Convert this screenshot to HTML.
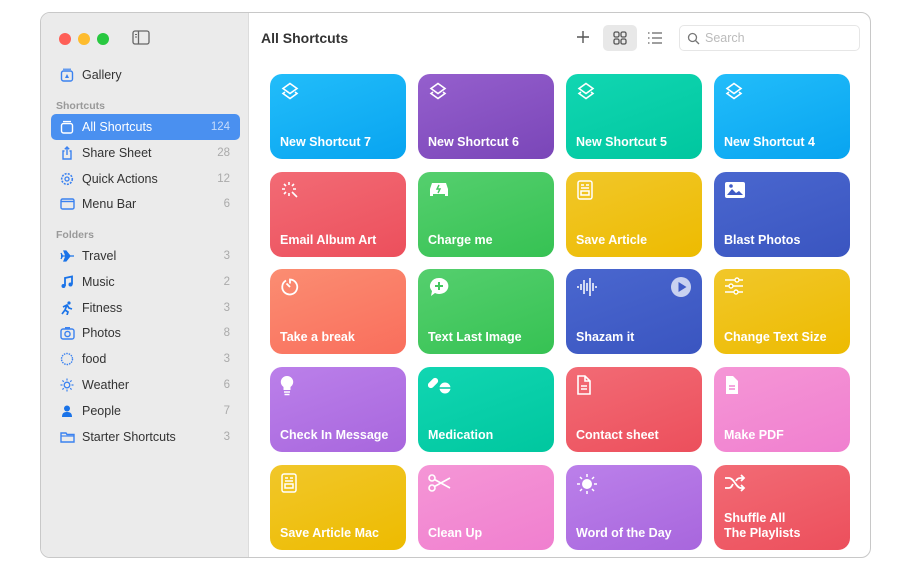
<!DOCTYPE html>
<html><head><meta charset="utf-8"><style>
*{box-sizing:border-box;margin:0;padding:0}
body{width:916px;height:573px;background:#fff;font-family:"Liberation Sans",sans-serif;position:relative;overflow:hidden}
.win{position:absolute;left:40px;top:12px;width:831px;height:546px;border:1px solid #c8c8c8;border-radius:10px;overflow:hidden;background:#fff}
.side{position:absolute;left:0;top:0;width:208px;height:100%;background:#ebebeb;border-right:1px solid #dcdcdc}
.dot{position:absolute;top:20px;width:12px;height:12px;border-radius:50%}
.it{position:absolute;left:10px;width:189px;height:26px;font-size:12.5px;color:#333;line-height:26px;padding-left:31px;border-radius:5px}
.it svg{position:absolute;left:9px;top:6px}
.it .c{position:absolute;right:10px;top:0;color:#aaa;font-size:11.5px}
.it.sel{background:#4a90f0;color:#fff}
.it.sel .c{color:#c7dcfb}
.hd{position:absolute;left:15px;font-size:10.5px;color:#999;font-weight:bold}
.t{position:absolute;width:136px;height:85px;border-radius:12px;color:#fff;font-weight:bold;font-size:12.5px}
.t .l{position:absolute;left:10px;bottom:9px;line-height:15px}
.t svg{position:absolute;left:10px;top:8px}
</style></head><body>
<div class="win">
<div class="side">
<div class="dot" style="left:18px;background:#fe5f57"></div>
<div class="dot" style="left:37px;background:#febc2e"></div>
<div class="dot" style="left:56px;background:#28c840"></div>
<svg style="position:absolute;left:91px;top:17px" width="18" height="15" viewBox="0 0 18 15"><rect x="1" y="1" width="16" height="13" rx="2" fill="none" stroke="#666" stroke-width="1.3"/><line x1="6.5" y1="1" x2="6.5" y2="14" stroke="#666" stroke-width="1.3"/><line x1="3" y1="4.5" x2="5" y2="4.5" stroke="#666"/><line x1="3" y1="7" x2="5" y2="7" stroke="#666"/></svg>
<div class="it" style="top:49px"><svg width="14" height="14" viewBox="0 0 14 14"><rect x="1.5" y="3" width="11" height="10" rx="2" fill="none" stroke="#3b82f0" stroke-width="1.4"/><line x1="3" y1="1.2" x2="11" y2="1.2" stroke="#3b82f0" stroke-width="1.2"/><path d="M5 10l2-4 2 4z" fill="#3b82f0"/></svg>Gallery</div>
<div class="hd" style="top:87px">Shortcuts</div>
<div class="it sel" style="top:101px"><svg width="14" height="14" viewBox="0 0 14 14"><rect x="1.5" y="3.5" width="11" height="9.5" rx="2" fill="none" stroke="#fff" stroke-width="1.4"/><line x1="3" y1="1.5" x2="11" y2="1.5" stroke="#fff" stroke-width="1.2"/></svg>All Shortcuts<span class="c">124</span></div>
<div class="it" style="top:127px"><svg width="14" height="14" viewBox="0 0 14 14"><path d="M4.5 5H3v8h8V5H9.5M7 9V1M4.8 3.2L7 1l2.2 2.2" fill="none" stroke="#3b82f0" stroke-width="1.4"/></svg>Share Sheet<span class="c">28</span></div>
<div class="it" style="top:153px"><svg width="14" height="14" viewBox="0 0 14 14"><circle cx="7" cy="7" r="5.3" fill="none" stroke="#3b82f0" stroke-width="1.6" stroke-dasharray="2 1.2"/><circle cx="7" cy="7" r="2" fill="none" stroke="#3b82f0" stroke-width="1.3"/></svg>Quick Actions<span class="c">12</span></div>
<div class="it" style="top:178px"><svg width="15" height="14" viewBox="0 0 15 14"><rect x="1" y="2" width="13" height="10" rx="1.5" fill="none" stroke="#3b82f0" stroke-width="1.4"/><line x1="1" y1="4.5" x2="14" y2="4.5" stroke="#3b82f0" stroke-width="1.4"/></svg>Menu Bar<span class="c">6</span></div>
<div class="hd" style="top:216px">Folders</div>
<div class="it" style="top:230px"><svg width="15" height="14" viewBox="0 0 15 14"><path d="M1 7h13M6 7L4 2h2l4 5-4 5H4z M1 4l1.5 3L1 10" fill="#1a73e8" stroke="#1a73e8" stroke-width="1.3"/></svg>Travel<span class="c">3</span></div>
<div class="it" style="top:256px"><svg width="14" height="14" viewBox="0 0 14 14"><path d="M5 11V3l7-1.5v8" fill="none" stroke="#1a73e8" stroke-width="1.8"/><circle cx="3.5" cy="11" r="2" fill="#1a73e8"/><circle cx="10.5" cy="9.5" r="2" fill="#1a73e8"/></svg>Music<span class="c">2</span></div>
<div class="it" style="top:282px"><svg width="14" height="14" viewBox="0 0 14 14"><circle cx="9" cy="2" r="1.6" fill="#1a73e8"/><path d="M3 6l4-2 2 3 3 1M7 4l-2 5-3 4M5 9l3 2-1 3" fill="none" stroke="#1a73e8" stroke-width="1.7"/></svg>Fitness<span class="c">3</span></div>
<div class="it" style="top:307px"><svg width="15" height="14" viewBox="0 0 15 14"><rect x="1" y="3" width="13" height="10" rx="2" fill="none" stroke="#3b82f0" stroke-width="1.4"/><rect x="5" y="1" width="5" height="2" fill="#3b82f0"/><circle cx="7.5" cy="8" r="2.6" fill="none" stroke="#3b82f0" stroke-width="1.4"/></svg>Photos<span class="c">8</span></div>
<div class="it" style="top:333px"><svg width="14" height="14" viewBox="0 0 14 14"><circle cx="7" cy="7" r="5.5" fill="none" stroke="#3b82f0" stroke-width="1.4" stroke-dasharray="1.5 1"/></svg>food<span class="c">3</span></div>
<div class="it" style="top:359px"><svg width="14" height="14" viewBox="0 0 14 14"><circle cx="7" cy="7" r="2.8" fill="none" stroke="#3b82f0" stroke-width="1.3"/><path d="M7 0.5v2M7 11.5v2M0.5 7h2M11.5 7h2M2.4 2.4l1.4 1.4M10.2 10.2l1.4 1.4M2.4 11.6l1.4-1.4M10.2 3.8l1.4-1.4" stroke="#3b82f0" stroke-width="1.2"/></svg>Weather<span class="c">6</span></div>
<div class="it" style="top:385px"><svg width="14" height="14" viewBox="0 0 14 14"><circle cx="7" cy="4.5" r="3" fill="#1a73e8"/><path d="M2 13c0-4 2-5 5-5s5 1 5 5z" fill="#1a73e8"/></svg>People<span class="c">7</span></div>
<div class="it" style="top:411px"><svg width="15" height="14" viewBox="0 0 15 14"><path d="M1 3h5l1 1.5h7V12H1z" fill="none" stroke="#3b82f0" stroke-width="1.4"/><line x1="1" y1="6" x2="14" y2="6" stroke="#3b82f0" stroke-width="1.2"/></svg>Starter Shortcuts<span class="c">3</span></div>
</div>
<div style="position:absolute;left:220px;top:17px;font-size:14px;font-weight:bold;color:#333">All Shortcuts</div>
<svg style="position:absolute;left:535px;top:17px" width="14" height="14"><path d="M7 1v12M1 7h12" stroke="#555" stroke-width="1.4"/></svg>
<div style="position:absolute;left:562px;top:12px;width:34px;height:26px;background:#e8e8e8;border-radius:5px"></div>
<svg style="position:absolute;left:572px;top:18px" width="14" height="14" viewBox="0 0 14 14" fill="none" stroke="#555" stroke-width="1.3"><rect x="1" y="1" width="5" height="5" rx="1.5"/><rect x="8" y="1" width="5" height="5" rx="1.5"/><rect x="1" y="8" width="5" height="5" rx="1.5"/><rect x="8" y="8" width="5" height="5" rx="1.5"/></svg>
<svg style="position:absolute;left:606px;top:18px" width="16" height="14" viewBox="0 0 16 14" stroke="#666" stroke-width="1.2"><path d="M5 2h10M5 7h10M5 12h10M1 2h1.5M1 7h1.5M1 12h1.5"/></svg>
<div style="position:absolute;left:638px;top:12px;width:181px;height:26px;border:1px solid #e6e6e6;border-radius:5px;font-size:12.5px;color:#bbb;line-height:24px;padding-left:25px">Search<svg style="position:absolute;left:7px;top:6px" width="13" height="13" viewBox="0 0 13 13" fill="none" stroke="#777" stroke-width="1.3"><circle cx="5.5" cy="5.5" r="4"/><path d="M8.5 8.5l3.5 3.5"/></svg></div>
</div>

<!-- tiles -->
<div class="t" style="left:270px;top:74px;background:linear-gradient(160deg,#22bdfa,#08a4f0)"><svg width="20" height="20" viewBox="0 0 20 20" fill="none" stroke="#fff" stroke-width="1.6"><path d="M10 1.5l7 5-7 5-7-5z M5 10l-2 1.5 7 5 7-5-2-1.5"/></svg><span class="l">New Shortcut 7</span></div>
<div class="t" style="left:418px;top:74px;background:linear-gradient(160deg,#955fcd,#7a46b8)"><svg width="20" height="20" viewBox="0 0 20 20" fill="none" stroke="#fff" stroke-width="1.6"><path d="M10 1.5l7 5-7 5-7-5z M5 10l-2 1.5 7 5 7-5-2-1.5"/></svg><span class="l">New Shortcut 6</span></div>
<div class="t" style="left:566px;top:74px;background:linear-gradient(160deg,#11d6b2,#00c79f)"><svg width="20" height="20" viewBox="0 0 20 20" fill="none" stroke="#fff" stroke-width="1.6"><path d="M10 1.5l7 5-7 5-7-5z M5 10l-2 1.5 7 5 7-5-2-1.5"/></svg><span class="l">New Shortcut 5</span></div>
<div class="t" style="left:714px;top:74px;background:linear-gradient(160deg,#22bdfa,#08a4f0)"><svg width="20" height="20" viewBox="0 0 20 20" fill="none" stroke="#fff" stroke-width="1.6"><path d="M10 1.5l7 5-7 5-7-5z M5 10l-2 1.5 7 5 7-5-2-1.5"/></svg><span class="l">New Shortcut 4</span></div>

<div class="t" style="left:270px;top:172px;background:linear-gradient(160deg,#f26b75,#ec4f5c)"><svg width="20" height="20" viewBox="0 0 20 20" stroke="#fff" stroke-width="1.6"><path d="M9 2v3M9 13v3M2 9h3M13 9h3M4 4l2 2M12 12l5 5M4 14l2-2M14 4l-2 2"/></svg><span class="l">Email Album Art</span></div>
<div class="t" style="left:418px;top:172px;background:linear-gradient(160deg,#55cf6e,#36c253)"><svg width="22" height="20" viewBox="0 0 22 20"><path d="M4 3h14l2 6v7h-3v-2H5v2H2V9z" fill="#fff"/><path d="M11 5l-2 4h3l-2 4" stroke="#44c760" stroke-width="1.4" fill="none"/></svg><span class="l">Charge me</span></div>
<div class="t" style="left:566px;top:172px;background:linear-gradient(160deg,#f1c72a,#edbb00)"><svg width="18" height="20" viewBox="0 0 18 20" fill="none" stroke="#fff" stroke-width="1.5"><rect x="2" y="1" width="14" height="18" rx="2"/><path d="M5 5h3M10 5h3M5 8h8M5 11h8v4H5z"/></svg><span class="l">Save Article</span></div>
<div class="t" style="left:714px;top:172px;background:linear-gradient(160deg,#4a67cf,#3a55c0)"><svg width="22" height="20" viewBox="0 0 22 20"><rect x="1" y="2" width="20" height="16" rx="2" fill="#fff"/><path d="M3 15l5-6 4 4 3-2 4 4z" fill="#3f5bc6"/><circle cx="7" cy="6" r="1.8" fill="#3f5bc6"/></svg><span class="l">Blast Photos</span></div>

<div class="t" style="left:270px;top:269px;background:linear-gradient(160deg,#fb8d72,#f96e5c)"><svg width="20" height="20" viewBox="0 0 20 20" fill="none" stroke="#fff" stroke-width="1.8"><path d="M6 3.5A7.5 7.5 0 1 0 10 2.5v4M10 10L6.5 6.5"/></svg><span class="l">Take a break</span></div>
<div class="t" style="left:418px;top:269px;background:linear-gradient(160deg,#55cf6e,#36c253)"><svg width="22" height="22" viewBox="0 0 22 22"><path d="M11 1a9 8 0 1 1-4 15l-4 3 1-5A9 8 0 0 1 11 1z" fill="#fff"/><path d="M11 5v8M7 9h8" stroke="#44c760" stroke-width="2"/></svg><span class="l">Text Last Image</span></div>
<div class="t" style="left:566px;top:269px;background:linear-gradient(160deg,#4a67cf,#3a55c0)"><svg width="22" height="20" viewBox="0 0 22 20" stroke="#fff" stroke-width="1.5"><path d="M2 9v2M5 7v6M8 3v14M11 6v8M14 1v18M17 6v8M20 9v2"/></svg><svg style="left:104px;top:7px" width="22" height="22" viewBox="0 0 22 22"><circle cx="11" cy="11" r="10" fill="#c9d2f0"/><path d="M8.5 6v10l8-5z" fill="#3f5bc6"/></svg><span class="l">Shazam it</span></div>
<div class="t" style="left:714px;top:269px;background:linear-gradient(160deg,#f1c72a,#edbb00)"><svg width="20" height="18" viewBox="0 0 20 18" stroke="#fff" stroke-width="1.4" fill="#edbb00"><path d="M1 3h18M1 9h18M1 15h18"/><circle cx="13" cy="3" r="2"/><circle cx="7" cy="9" r="2"/><circle cx="12" cy="15" r="2"/></svg><span class="l">Change Text Size</span></div>

<div class="t" style="left:270px;top:367px;background:linear-gradient(160deg,#bb80ea,#a866dd)"><svg width="14" height="22" viewBox="0 0 14 22"><path d="M7 1a6 6 0 0 1 3.5 11V15h-7v-3A6 6 0 0 1 7 1z" fill="#fff"/><path d="M4 17h6M4.5 19.5h5" stroke="#fff" stroke-width="1.4"/></svg><span class="l">Check In Message</span></div>
<div class="t" style="left:418px;top:367px;background:linear-gradient(160deg,#11d6b2,#00c79f)"><svg width="24" height="20" viewBox="0 0 24 20"><rect x="2" y="2" width="6" height="12" rx="3" transform="rotate(45 5 8)" fill="#fff"/><circle cx="17" cy="13" r="5.5" fill="#fff"/><path d="M11.5 13h11" stroke="#00c9a2" stroke-width="1.5"/></svg><span class="l">Medication</span></div>
<div class="t" style="left:566px;top:367px;background:linear-gradient(160deg,#f26b75,#ec4f5c)"><svg width="16" height="20" viewBox="0 0 16 20" fill="none" stroke="#fff" stroke-width="1.6"><path d="M2 1h7l5 5v13H2z M9 1v5h5 M5 11h6M5 14h6"/></svg><span class="l">Contact sheet</span></div>
<div class="t" style="left:714px;top:367px;background:linear-gradient(160deg,#f596d6,#f07fcf)"><svg width="16" height="20" viewBox="0 0 16 20"><path d="M2 1h7l5 5v13H2z" fill="#fff"/><path d="M5 11h6M5 14h6" stroke="#f28ad3" stroke-width="1.4"/></svg><span class="l">Make PDF</span></div>

<div class="t" style="left:270px;top:465px;background:linear-gradient(160deg,#f1c72a,#edbb00)"><svg width="18" height="20" viewBox="0 0 18 20" fill="none" stroke="#fff" stroke-width="1.5"><rect x="2" y="1" width="14" height="18" rx="2"/><path d="M5 5h3M10 5h3M5 8h8M5 11h8v4H5z"/></svg><span class="l">Save Article Mac</span></div>
<div class="t" style="left:418px;top:465px;background:linear-gradient(160deg,#f596d6,#f07fcf)"><svg width="24" height="20" viewBox="0 0 24 20" fill="none" stroke="#fff" stroke-width="1.6"><circle cx="4" cy="5" r="3"/><circle cx="4" cy="15" r="3"/><path d="M6.5 6.5L22 15M6.5 13.5L22 5"/></svg><span class="l">Clean Up</span></div>
<div class="t" style="left:566px;top:465px;background:linear-gradient(160deg,#bb80ea,#a866dd)"><svg width="22" height="22" viewBox="0 0 22 22"><circle cx="11" cy="11" r="5" fill="#fff"/><path d="M11 1v3M11 18v3M1 11h3M18 11h3M4 4l2 2M16 16l2 2M4 18l2-2M16 6l2-2" stroke="#fff" stroke-width="1.5"/></svg><span class="l">Word of the Day</span></div>
<div class="t" style="left:714px;top:465px;background:linear-gradient(160deg,#f26b75,#ec4f5c)"><svg width="22" height="20" viewBox="0 0 22 20" fill="none" stroke="#fff" stroke-width="1.8"><path d="M1 5h4c5 0 7 10 12 10h3M1 15h4c2 0 3-2 4-4M12 8c1-2 2-3 5-3h3M17 2l3 3-3 3M17 12l3 3-3 3"/></svg><span class="l">Shuffle All<br>The Playlists</span></div>
</body></html>
